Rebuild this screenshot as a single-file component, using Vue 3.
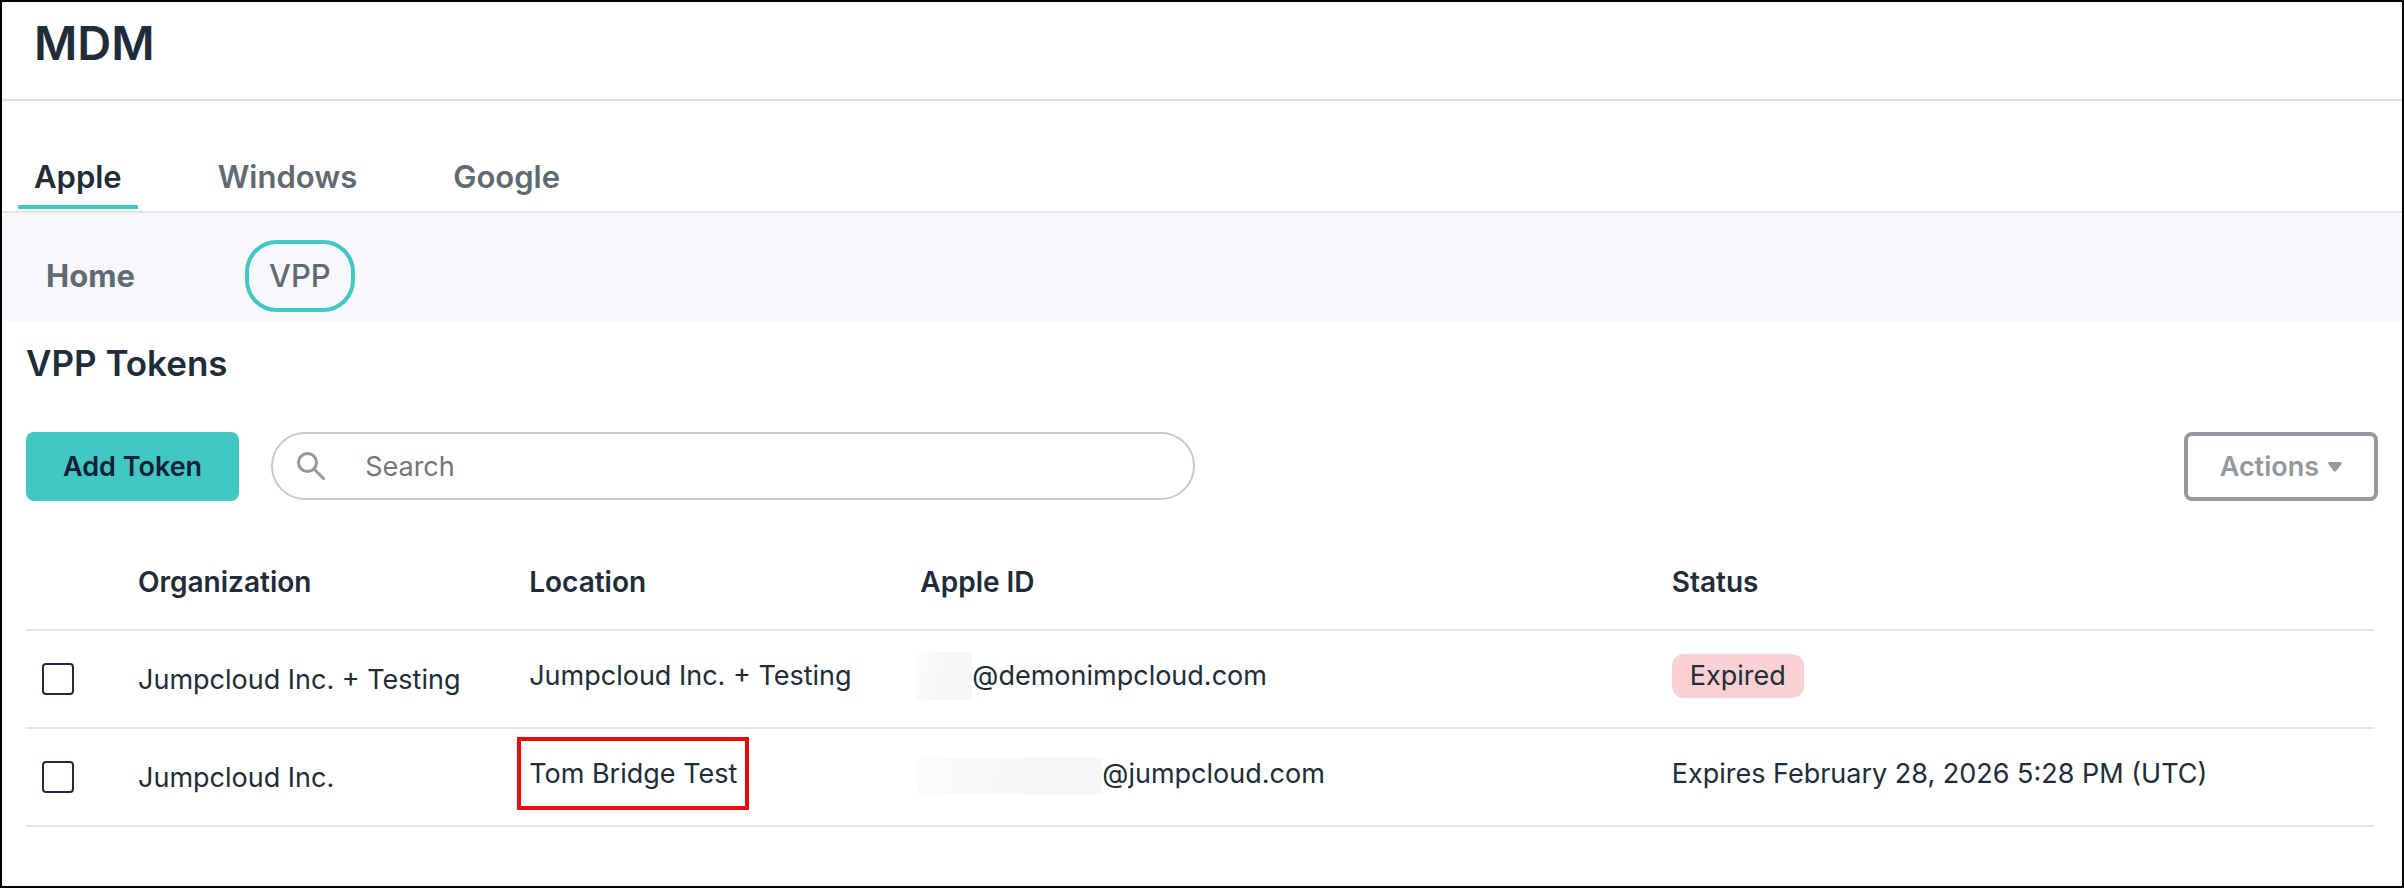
<template>
  <div class="mdm-page">
    <header class="page-header">
      <h1 class="page-title">MDM</h1>
    </header>

    <nav class="tabs" aria-label="Platforms">
      <a
        v-for="tab in tabs"
        :key="tab"
        href="#"
        class="tab"
        :class="{ active: tab === activeTab }"
        @click.prevent="activeTab = tab"
      >{{ tab }}</a>
    </nav>

    <nav class="sub-nav" aria-label="Apple sections">
      <a href="#" class="sub-link">Home</a>
      <a href="#" class="sub-link selected">VPP</a>
    </nav>

    <main class="content">
      <h2 class="section-title">VPP Tokens</h2>

      <div class="toolbar">
        <button type="button" class="btn-add">Add Token</button>

        <div class="search-box">
          <svg class="search-icon" viewBox="0 0 28 28" aria-hidden="true">
            <circle cx="10.5" cy="10.5" r="9" fill="none" stroke="currentColor" stroke-width="3" />
            <path d="M17.5 17.5 L26.5 26.5" stroke="currentColor" stroke-width="3" stroke-linecap="round" />
          </svg>
          <input v-model="search" type="text" class="search-input" placeholder="Search" aria-label="Search" />
        </div>

        <button type="button" class="btn-actions">
          Actions
          <svg class="caret" viewBox="0 0 14 10" aria-hidden="true">
            <path d="M1.2 0 H12.8 Q14.2 .6 13.6 2 L8.2 9 Q7 10.2 5.8 9 L.4 2 Q-.2 .6 1.2 0 Z" fill="currentColor" />
          </svg>
        </button>
      </div>

      <div class="table-wrapper">
        <table class="token-table">
          <thead>
            <tr>
              <th class="col-check"></th>
              <th class="col-org">Organization</th>
              <th class="col-location">Location</th>
              <th class="col-apple-id">Apple ID</th>
              <th>Status</th>
            </tr>
          </thead>
          <tbody>
            <tr v-for="token in tokens" :key="token.id">
              <td class="cell-main">
                <input
                  v-model="selected"
                  type="checkbox"
                  class="checkbox"
                  :value="token.id"
                  :aria-label="'Select ' + token.organization"
                />
              </td>
              <td class="cell-main">{{ token.organization }}</td>
              <td>
                <span :class="{ highlighted: token.highlighted }">{{ token.location }}</span>
              </td>
              <td>
                <div class="apple-id">
                  <span class="masked" :class="token.mask"></span>
                  <span>{{ token.domain }}</span>
                </div>
              </td>
              <td>
                <span :class="{ badge: token.expired }">{{ token.status }}</span>
              </td>
            </tr>
          </tbody>
        </table>
      </div>
    </main>
  </div>
</template>

<script setup>
import { ref } from 'vue';

const tabs = ['Apple', 'Windows', 'Google'];
const activeTab = ref('Apple');
const search = ref('');
const selected = ref([]);

const tokens = [
  {
    id: 1,
    organization: 'Jumpcloud Inc. + Testing',
    location: 'Jumpcloud Inc. + Testing',
    domain: '@demonimpcloud.com',
    mask: 'masked-short',
    status: 'Expired',
    expired: true,
    highlighted: false
  },
  {
    id: 2,
    organization: 'Jumpcloud Inc.',
    location: 'Tom Bridge Test',
    domain: '@jumpcloud.com',
    mask: 'masked-long',
    status: 'Expires February 28, 2026 5:28 PM (UTC)',
    expired: false,
    highlighted: true
  }
];
</script>

<style>
body {
  margin: 0;
}
</style>

<style scoped>
.mdm-page {
  box-sizing: border-box;
  min-height: 100vh;
  border: 2px solid #000;
  background-color: #fff;
  color: #202d38;
  font-family: Inter, "Liberation Sans", sans-serif;
  font-size: 27px;
  line-height: 40px;
}

.page-header {
  padding: 0 32px 15px;
  border-bottom: 2px solid #dcdfde;
}

.page-title {
  margin: 0;
  font-size: 47px;
  font-weight: 600;
  line-height: 82px;
}

.tabs {
  display: flex;
  gap: 64px;
  padding: 56px 16px 2px;
  border-bottom: 2px solid #e1e7e6;
}

.tab {
  padding: 0 16px 8px;
  border-bottom: 4px solid transparent;
  color: #5f6b73;
  font-size: 31px;
  font-weight: 600;
  text-decoration: none;
}

.tab.active {
  border-bottom-color: #41c8c3;
  color: #202d38;
}

.sub-nav {
  display: flex;
  align-items: center;
  gap: 86px;
  padding: 27px 20px 9px;
  background-color: #f7f7fc;
}

.sub-link {
  padding: 12px 20px;
  border: 4px solid transparent;
  border-radius: 32px;
  color: #5f6b73;
  font-size: 31px;
  font-weight: 700;
  text-decoration: none;
}

.sub-link.selected {
  border-color: #41c8c3;
  font-weight: 500;
}

.content {
  padding: 20px 24px;
}

.section-title {
  margin: 0 0 47px;
  font-size: 35px;
  font-weight: 600;
  line-height: 44px;
}

.toolbar {
  display: flex;
  align-items: stretch;
  gap: 32px;
}

.btn-add,
.btn-actions {
  height: 69px;
  border-radius: 8px;
  font-family: inherit;
  font-size: 27px;
  font-weight: 600;
  cursor: pointer;
}

.btn-add {
  padding: 0 37px;
  border: none;
  background-color: #41c8c3;
  color: #132035;
}

.btn-actions {
  display: flex;
  align-items: center;
  gap: 9px;
  margin-left: auto;
  padding: 0 32px;
  border: 4px solid #93999f;
  background-color: #fff;
  color: #93999f;
}

.caret {
  width: 14px;
  height: 10px;
}

.search-box {
  box-sizing: border-box;
  display: flex;
  flex: 0 1 924px;
  align-items: center;
  gap: 40px;
  height: 68px;
  padding: 0 24px;
  border: 2px solid #c8c8cf;
  border-radius: 34px;
}

.search-icon {
  flex: none;
  width: 28px;
  height: 28px;
  color: #93999f;
}

.search-input {
  flex: 1;
  min-width: 0;
  padding: 0;
  border: none;
  outline: none;
  background: transparent;
  color: inherit;
  font-family: inherit;
  font-size: 27px;
}

.search-input::placeholder {
  color: #757575;
}

.table-wrapper {
  margin-top: 36px;
  padding-right: 4px;
}

.token-table {
  width: 100%;
  border-spacing: 0;
  table-layout: fixed;
}

.token-table th {
  padding: 25px 0 27px;
  border-bottom: 2px solid #e1e7e6;
  font-size: 28px;
  font-weight: 600;
  text-align: left;
}

.token-table td {
  height: 40px;
  padding: 25px 0 31px;
  border-bottom: 2px solid #e1e7e6;
  vertical-align: top;
}

.token-table .cell-main {
  padding: 29px 0 27px;
}

.col-check {
  width: 112px;
}

.col-org,
.col-location {
  width: 16.66%;
}

.col-apple-id {
  width: 32%;
}

.checkbox {
  display: block;
  width: 32px;
  height: 32px;
  margin: 3px 16px;
  border: 2px solid #202d38;
  border-radius: 4px;
  background-color: #fff;
  appearance: none;
  cursor: pointer;
}

.checkbox:checked {
  background-color: #41c8c3;
}

.highlighted {
  position: relative;
}

/* Callout frame drawn over the cell */
.highlighted::after {
  content: "";
  position: absolute;
  inset: -20px -12px;
  border: 4px solid #ea0a0a;
}

.apple-id {
  display: flex;
  align-items: center;
  height: 40px;
  margin-left: -4px;
}

.masked {
  background: linear-gradient(100deg, #fcfcfc, #f6f6f6 60%);
}

.masked-short {
  width: 56px;
  height: 48px;
}

.masked-long {
  width: 184px;
  height: 36px;
  margin: 4px 0 0 2px;
}

.badge {
  display: inline-block;
  margin: -2px 0;
  padding: 2px 18px;
  border-radius: 12px;
  background-color: #fbd0d4;
}
</style>
